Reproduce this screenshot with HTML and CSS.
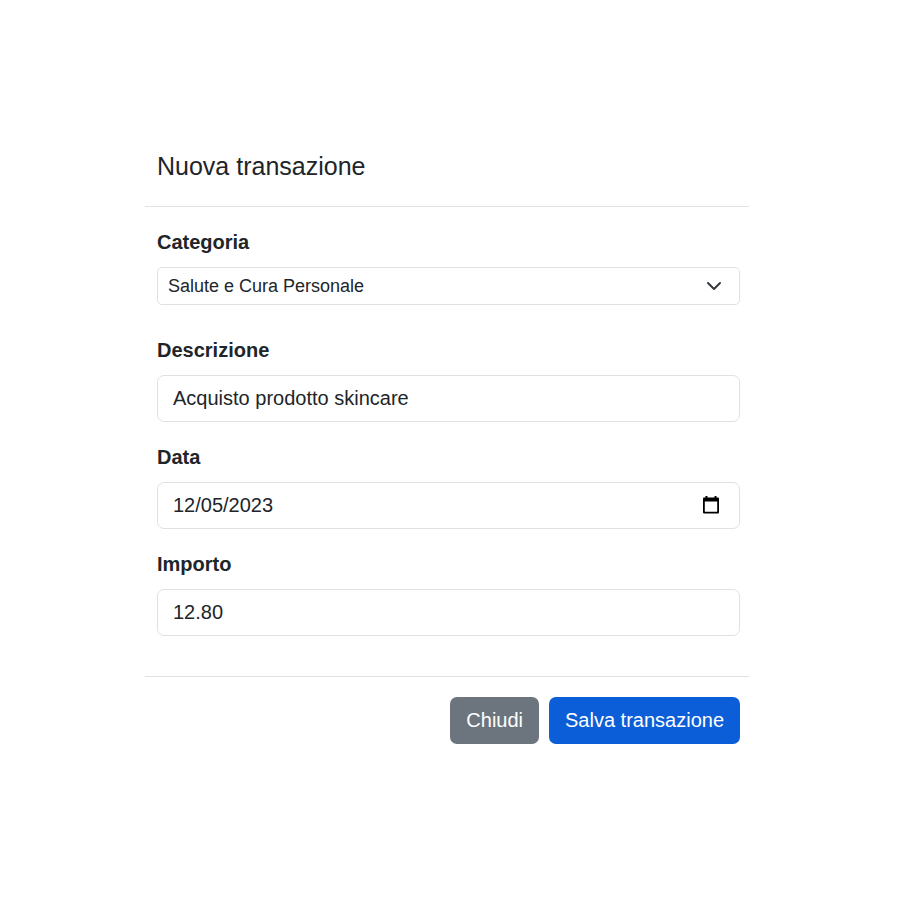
FILE: index.html
```html
<!DOCTYPE html>
<html lang="it">
<head>
<meta charset="utf-8">
<meta name="viewport" content="width=device-width, initial-scale=1">
<title>Nuova transazione</title>
<link rel="stylesheet" href="styles.css">
</head>
<body>
<form class="dialog">
  <header class="dialog-header">
    <h1 class="dialog-title">Nuova transazione</h1>
  </header>
  <div class="dialog-body">
    <div class="field field-category">
      <label class="label" for="category">Categoria</label>
      <div class="select-wrap">
        <select class="control control-select" id="category">
          <option>Salute e Cura Personale</option>
        </select>
        <svg class="chevron" viewBox="0 0 16 16" aria-hidden="true"><path d="m2 5 6 6 6-6"/></svg>
      </div>
    </div>
    <div class="field">
      <label class="label" for="description">Descrizione</label>
      <input class="control" id="description" type="text" value="Acquisto prodotto skincare">
    </div>
    <div class="field">
      <label class="label" for="date">Data</label>
      <div class="control control-date">
        <input class="date-input" id="date" type="text" value="12/05/2023">
        <button class="date-button" type="button" aria-label="Apri calendario">
          <svg class="calendar" viewBox="0 0 16 18" aria-hidden="true"><path fill-rule="evenodd" d="M2.500 0h2v1.500h7V0h2v1.500h1.200c.8 0 1.300.5 1.300 1.300v13.400c0 .8-.5 1.300-1.300 1.300H1.300C.5 17.500 0 17 0 16.200V2.800C0 2 .5 1.500 1.300 1.500h1.200zM1.800 5.600v10.200h12.400V5.600z"/></svg>
        </button>
      </div>
    </div>
    <div class="field">
      <label class="label" for="amount">Importo</label>
      <input class="control" id="amount" type="text" inputmode="decimal" value="12.80">
    </div>
  </div>
  <footer class="dialog-footer">
    <button class="button button-secondary" type="button">Chiudi</button>
    <button class="button button-primary" type="button">Salva transazione</button>
  </footer>
</form>
</body>
</html>
```
FILE: styles.css
```css
* {
  box-sizing: border-box;
}

body {
  margin: 0;
  padding: 127px 151px 0 145px;
  background: #fff;
  color: #212529;
  font-family: "Liberation Sans", Arial, sans-serif;
  font-size: 20px;
  line-height: 30px;
}

.dialog-header {
  padding: 21px 12px;
  border-bottom: 1px solid #dee2e6;
}

.dialog-title {
  margin: 0;
  font-size: 25px;
  font-weight: 400;
  line-height: 37px;
}

.dialog-body {
  display: flex;
  flex-direction: column;
  gap: 20px;
  padding: 20px 9px 40px 12px;
}

.field-category {
  padding-bottom: 10px;
}

.label {
  display: block;
  margin-bottom: 10px;
  font-weight: 700;
}

.control {
  display: block;
  width: 100%;
  padding: 7px 15px 8px;
  border: 1px solid #dee2e6;
  border-radius: 7px;
  background: #fff;
  color: inherit;
  font: inherit;
}

.select-wrap {
  display: grid;
  align-items: center;
}

.control-select {
  grid-area: 1 / 1;
  height: 38px;
  padding: 0 40px 0 10px;
  border-radius: 5px;
  font-size: 18px;
  appearance: none;
}

.chevron {
  grid-area: 1 / 1;
  justify-self: end;
  width: 16px;
  height: 16px;
  margin-right: 18px;
  fill: none;
  stroke: #343a40;
  stroke-width: 2;
  stroke-linecap: round;
  stroke-linejoin: round;
  pointer-events: none;
}

.control-date {
  display: flex;
  align-items: center;
}

.date-input {
  flex: 1;
  min-width: 0;
  height: 30px;
  padding: 0;
  border: 0;
  background: none;
  color: inherit;
  font: inherit;
}

.date-button {
  display: flex;
  padding: 0 5px;
  border: 0;
  background: none;
}

.calendar {
  width: 16px;
  height: 18px;
}

.dialog-footer {
  display: flex;
  justify-content: flex-end;
  gap: 10px;
  padding: 20px 9px 20px 12px;
  border-top: 1px solid #dee2e6;
}

.button {
  padding: 8px 16px 9px;
  border: 0;
  border-radius: 7px;
  color: #fff;
  font: inherit;
}

.button-secondary {
  background: #6c757d;
}

.button-primary {
  background: #0b5ed7;
}
```
